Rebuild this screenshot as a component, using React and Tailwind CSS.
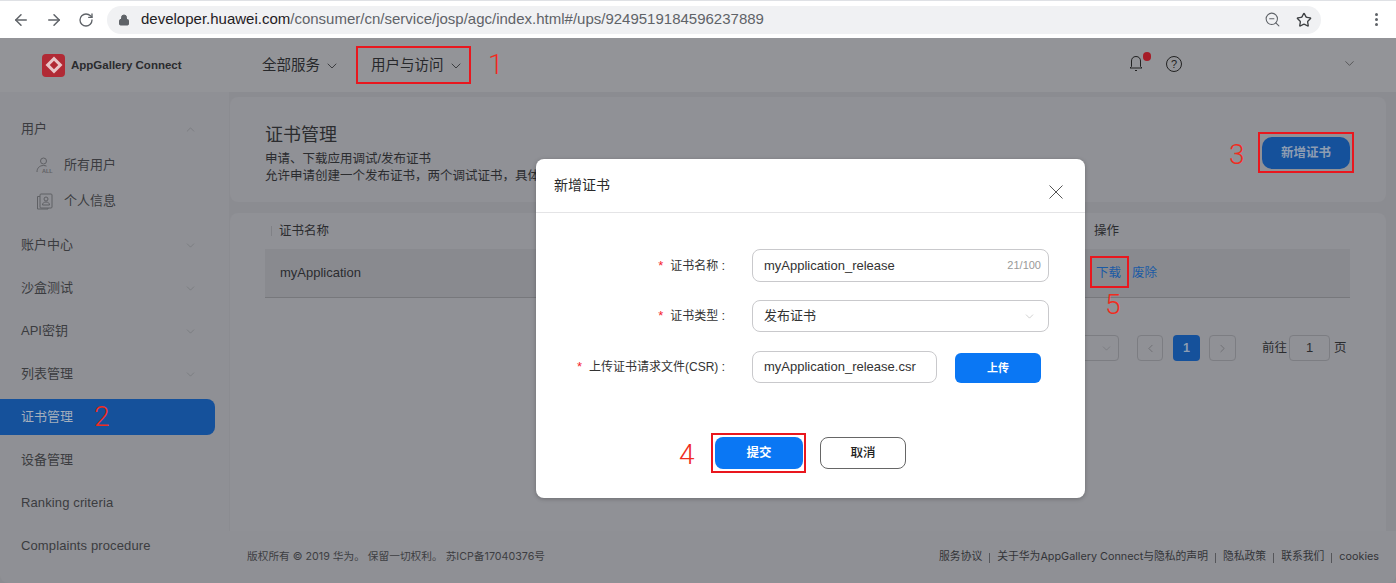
import React from "react";
import { ArrowLeft, ArrowRight, RotateCw, Lock, ZoomOut, Star, ChevronDown, ChevronUp, ChevronLeft, ChevronRight } from "lucide-react";

const FONT = { fontFamily: '"Liberation Sans","Noto Sans CJK SC",sans-serif' };
const INTER = { fontFamily: 'Inter,"Noto Sans CJK SC",sans-serif' };
const ROBOTO = { fontFamily: 'Roboto,"Liberation Sans",sans-serif' };

function Mark({ className, children }) {
  return <div className={`absolute border-2 border-[#e9171e] ${className}`}>{children}</div>;
}
function Num({ className, children }) {
  return <div style={ROBOTO} className={`absolute text-[28px] font-light leading-none text-[#f02c1f] ${className}`}>{children}</div>;
}
function SideItem({ label, open, chevron, active, en }) {
  return (
    <div className={`flex h-[36px] mb-[7px] items-center justify-between pl-[21px] pr-[18px] w-[215px] text-[13px] ${active ? "bg-[#15519b] rounded-r-[8px] text-[#a3aebb]" : "text-[#3b3c40]"} ${en ? "tracking-[0.12px]" : ""}`}>
      <span>{label}</span>
      {chevron && (open ? <ChevronUp size={13} strokeWidth={1} className="text-[#6c6d71]" /> : <ChevronDown size={13} strokeWidth={1} className="text-[#6c6d71]" />)}
    </div>
  );
}
function FormRow({ label, children, mb }) {
  return (
    <div className={`flex items-center ${mb}`}>
      <div className="w-[216px] pr-[27px] flex justify-end items-center text-[12px] text-[#333]">
        <span className="text-[#f5222d] text-[13px] mr-[7px]">*</span>
        <span>{label}</span>
        <span className="ml-[3px] text-[13px]">:</span>
      </div>
      {children}
    </div>
  );
}
const AllIcon = () => (
  <svg width="17" height="16" viewBox="0 0 17 16" fill="none" stroke="#5f6064" strokeWidth="1">
    <circle cx="7.5" cy="4" r="3" />
    <path d="M1 15c0-4 2.500-6.500 6.500-6.500 1 0 2 .2 3 .6" />
    <text x="6" y="15.500" fontSize="5.500" fontWeight="700" fill="#5f6064" stroke="none" fontFamily="Liberation Sans">ALL</text>
  </svg>
);
const InfoIcon = () => (
  <svg width="17" height="17" viewBox="0 0 17 17" fill="none" stroke="#5f6064" strokeWidth="1">
    <rect x="4" y="1" width="12" height="14" rx="1" />
    <path d="M4 3.500H1.500V16H12v-1" />
    <circle cx="10" cy="6" r="2" />
    <path d="M6.500 12c0-2 1.500-3 3.500-3s3.500 1 3.500 3z" />
  </svg>
);

export default function App() {
  return (
    <div className="relative w-[1396px] h-[583px] overflow-hidden bg-[#8b8c91] flex flex-col" style={FONT}>
      <div className="h-[38px] shrink-0 bg-white border-t border-[#dfe1e5] flex items-center pl-[12px] pr-[75px] text-[#5f6368]">
        <ArrowLeft size={18} strokeWidth={2} />
        <ArrowRight size={18} strokeWidth={2} className="ml-[15px]" />
        <RotateCw size={16} strokeWidth={2} className="ml-[15px]" />
        <div className="ml-[13px] flex-1 h-[28px] rounded-full bg-[#f0f1f3] flex items-center pl-[11px] pr-[9px]">
          <Lock size={12} fill="#5f6368" strokeWidth={2} />
          <div className="ml-[11px] text-[15px] text-[#5f6368] flex-1 whitespace-nowrap">
            <span className="text-[#1f2023]">developer.huawei.com</span>/consumer/cn/service/josp/agc/index.html#/ups/9249519184596237889
          </div>
          <ZoomOut size={17} strokeWidth={1.500} />
          <Star size={16} strokeWidth={2} className="ml-[15px] text-[#3d4043]" />
        </div>
        <div className="absolute left-[1375px] top-[13px] flex flex-col gap-[2px]">
          <span className="w-[3px] h-[3px] rounded-full bg-[#5f6368]" />
          <span className="w-[3px] h-[3px] rounded-full bg-[#5f6368]" />
          <span className="w-[3px] h-[3px] rounded-full bg-[#5f6368]" />
        </div>
      </div>

      <div className="h-[54px] shrink-0 bg-[#939498] flex items-center relative">
        <div className="ml-[42px] w-[23px] h-[23px] rounded-[4px] bg-[#b12a35] flex items-center justify-center">
          <div className="w-[12px] h-[12px] rotate-45 border-[3px] border-[#e9c5c8]" />
        </div>
        <div className="ml-[6px] pt-[1px] w-[191px] text-[11.500px] font-bold text-[#2a2b2e]">AppGallery Connect</div>
        <div className="flex items-center pt-[1px] text-[14.500px] text-[#27282b]">全部服务<ChevronDown size={16} strokeWidth={1.200} className="ml-[4px]" /></div>
        <div className="ml-[31px] flex items-center pt-[1px] text-[14.500px] text-[#27282b]">用户与访问<ChevronDown size={16} strokeWidth={1.200} className="ml-[4px]" /></div>
        <svg className="absolute left-[1128px] top-[17px]" width="16" height="18" viewBox="0 0 16 18" fill="none" stroke="#222" strokeWidth="1">
          <path d="M8 1.500c-3 0-4.500 2-4.500 4.500v5.500L2 13h12l-1.500-1.500V6c0-2.500-1.500-4.500-4.500-4.500z" />
          <path d="M7 15.500h2" />
        </svg>
        <div className="absolute left-[1143px] top-[14px] w-[8px] h-[9px] rounded-full bg-[#a61c27]" />
        <div className="absolute left-[1166px] top-[18px] w-[16px] h-[16px] rounded-full border border-[#222] flex items-center justify-center text-[11px] text-[#222]">?</div>
        <ChevronDown size={15} strokeWidth={1} className="absolute left-[1342px] top-[18px] text-[#333]" />
      </div>

      <div className="flex-1 flex min-h-0">
        <div className="w-[229px] shrink-0 bg-[#8f9095] pt-[19px] rounded-bl-[8px]">
          <SideItem label="用户" chevron open />
          <div className="h-[72px] -mt-[7px] mb-[8px] flex flex-col text-[13px] text-[#3b3c40]">
            <div className="h-[36px] flex items-center pl-[36px]"><AllIcon /><span className="ml-[11px]">所有用户</span></div>
            <div className="h-[36px] flex items-center pl-[36px]"><InfoIcon /><span className="ml-[11px]">个人信息</span></div>
          </div>
          <SideItem label="账户中心" chevron />
          <SideItem label="沙盒测试" chevron />
          <SideItem label="API密钥" chevron />
          <SideItem label="列表管理" chevron />
          <SideItem label="证书管理" active />
          <SideItem label="设备管理" />
          <SideItem label="Ranking criteria" en />
          <SideItem label="Complaints procedure" en />
        </div>

        <div className="flex-1 flex flex-col min-w-0">
          <div className="flex-1 pt-[5px] pr-[10px] pl-[1px] flex flex-col">
            <div className="h-[105px] bg-[#909196] rounded-[8px] pl-[35px] pr-[36px] pt-[25px] flex justify-between">
              <div>
                <div className="text-[18px] leading-[26px] text-[#2b2c2f]">证书管理</div>
                <div className="text-[12.500px] leading-[17px] mt-[3px] text-[#2b2c2f]">申请、下载应用调试/发布证书</div>
                <div className="text-[12.500px] leading-[17px] text-[#2b2c2f]">允许申请创建一个发布证书，两个调试证书，具体</div>
              </div>
              <div className="w-[88px] h-[32px] mt-[15px] rounded-[10px] bg-[#15519b] text-[#8d9db2] text-[12.500px] font-bold flex items-center justify-center">新增证书</div>
            </div>
            <div className="mt-[11px] flex-1 bg-[#909196] rounded-t-[8px] pl-[35px] pr-[36px]">
              <div className="h-[36px] flex items-center text-[12.500px] text-[#2b2c2f] relative">
                <span className="w-px h-[10px] bg-[#808186] ml-[6px]" />
                <span className="ml-[7px]">证书名称</span>
                <span className="absolute left-[829px]">操作</span>
              </div>
              <div className="h-[49px] bg-[#898a8f] border-b border-[#77787c] flex items-center relative text-[13px] text-[#2b2c2f]">
                <span className="ml-[15px]">myApplication</span>
                <span className="absolute left-[831px] text-[12.500px] text-[#1a5aa5]">下载</span>
                <span className="absolute left-[867px] text-[12.500px] text-[#1a5aa5]">废除</span>
              </div>
              <div className="mt-[37px] ml-[780px] h-[26px] flex items-center text-[12.500px] text-[#2b2c2f]">
                <div className="w-[74px] h-[26px] rounded-[4px] border border-[#7c7d82] flex items-center justify-end pr-[5px] text-[#6c6d71]"><ChevronDown size={13} strokeWidth={1} /></div>
                <div className="ml-[18px] w-[26px] h-[26px] rounded-[4px] border border-[#7c7d82] flex items-center justify-center text-[#55565a]"><ChevronLeft size={13} strokeWidth={1} /></div>
                <div className="ml-[10px] w-[27px] h-[26px] rounded-[4px] bg-[#15519b] font-bold text-[#8d9db2] flex items-center justify-center">1</div>
                <div className="ml-[9px] w-[27px] h-[26px] rounded-[4px] border border-[#7c7d82] flex items-center justify-center text-[#55565a]"><ChevronRight size={13} strokeWidth={1} /></div>
                <span className="ml-[26px]">前往</span>
                <div className="ml-[2px] w-[41px] h-[26px] rounded-[4px] border border-[#7c7d82] flex items-center justify-center text-[13px]">1</div>
                <span className="ml-[4px]">页</span>
              </div>
            </div>
          </div>
          <div style={INTER} className="h-[52px] shrink-0 bg-[#8f9095] flex items-center justify-between pl-[18px] pr-[17px] pt-[1px] text-[10.700px] text-[#3d3e42] rounded-br-[8px]">
            <span>版权所有 © 2019 华为。 保留一切权利。 苏ICP备17040376号</span>
            <div className="flex items-center gap-[7px] text-[10.800px] text-[#333438]">
              <span>服务协议</span><i className="w-px h-[10px] bg-[#55565a]" />
              <span>关于华为AppGallery Connect与隐私的声明</span><i className="w-px h-[10px] bg-[#55565a]" />
              <span>隐私政策</span><i className="w-px h-[10px] bg-[#55565a]" />
              <span>联系我们</span><i className="w-px h-[10px] bg-[#55565a]" />
              <span>cookies</span>
            </div>
          </div>
        </div>
      </div>

      {/* dialog */}
      <div className="absolute left-[536px] top-[159px] w-[549px] h-[339px] bg-white rounded-[8px] shadow-[0_1px_4px_rgba(0,0,0,0.25)] flex flex-col">
        <div className="h-[54px] shrink-0 border-b border-[#e4e4e6] flex justify-between pl-[18px] pr-[22px]">
          <span className="text-[14px] leading-[20px] mt-[16px] text-[#2a2a2a]">新增证书</span>
          <svg className="mt-[26px]" width="14" height="14" viewBox="0 0 14 14" fill="none" stroke="#555" strokeWidth="1"><path d="M.5.5l13 13M13.500.5l-13 13" /></svg>
        </div>
        <div className="pt-[36px] flex flex-col">
          <FormRow label="证书名称" mb="mb-[18px]">
            <div className="w-[297px] h-[33px] rounded-[8px] border border-[#c9c9cc] flex items-center justify-between pl-[11px] pr-[7px]">
              <span className="text-[13px] text-[#333]">myApplication_release</span>
              <span className="text-[11px] text-[#999]">21/100</span>
            </div>
          </FormRow>
          <FormRow label="证书类型" mb="mb-[19px]">
            <div className="w-[297px] h-[32px] rounded-[8px] border border-[#c9c9cc] flex items-center justify-between pl-[11px] pr-[12px]">
              <span className="text-[13px] text-[#333]">发布证书</span>
              <ChevronDown size={13} strokeWidth={1} className="text-[#aaa]" />
            </div>
          </FormRow>
          <FormRow label="上传证书请求文件(CSR)" mb="">
            <div className="w-[185px] h-[32px] rounded-[8px] border border-[#c9c9cc] flex items-center pl-[11px]">
              <span className="text-[13px] text-[#333]">myApplication_release.csr</span>
            </div>
            <div className="ml-[18px] mt-[2px] w-[86px] h-[30px] rounded-[6px] bg-[#0a77f4] text-white text-[11px] font-bold flex items-center justify-center">上传</div>
          </FormRow>
        </div>
        <div className="mt-[54px] ml-[179px] flex">
          <div className="w-[88px] h-[32px] rounded-[8px] bg-[#0a77f4] text-white text-[12.500px] font-bold flex items-center justify-center">提交</div>
          <div className="ml-[17px] w-[86px] h-[32px] rounded-[8px] border border-[#666] text-[#222] text-[12.500px] font-medium flex items-center justify-center">取消</div>
        </div>
      </div>

      {/* annotations */}
      <Mark className="left-[356px] top-[46px] w-[115px] h-[38px]" />
      <Num className="left-[488px] top-[51px]">1</Num>
      <Num className="left-[94px] top-[403px]">2</Num>
      <Mark className="left-[1258px] top-[132px] w-[96px] h-[41px]" />
      <Num className="left-[1229px] top-[141px]">3</Num>
      <Mark className="left-[711px] top-[433px] w-[95px] h-[40px]" />
      <Num className="left-[679px] top-[441px]">4</Num>
      <Mark className="left-[1090px] top-[256px] w-[39px] h-[32px]" />
      <Num className="left-[1105px] top-[291px]">5</Num>
    </div>
  );
}
